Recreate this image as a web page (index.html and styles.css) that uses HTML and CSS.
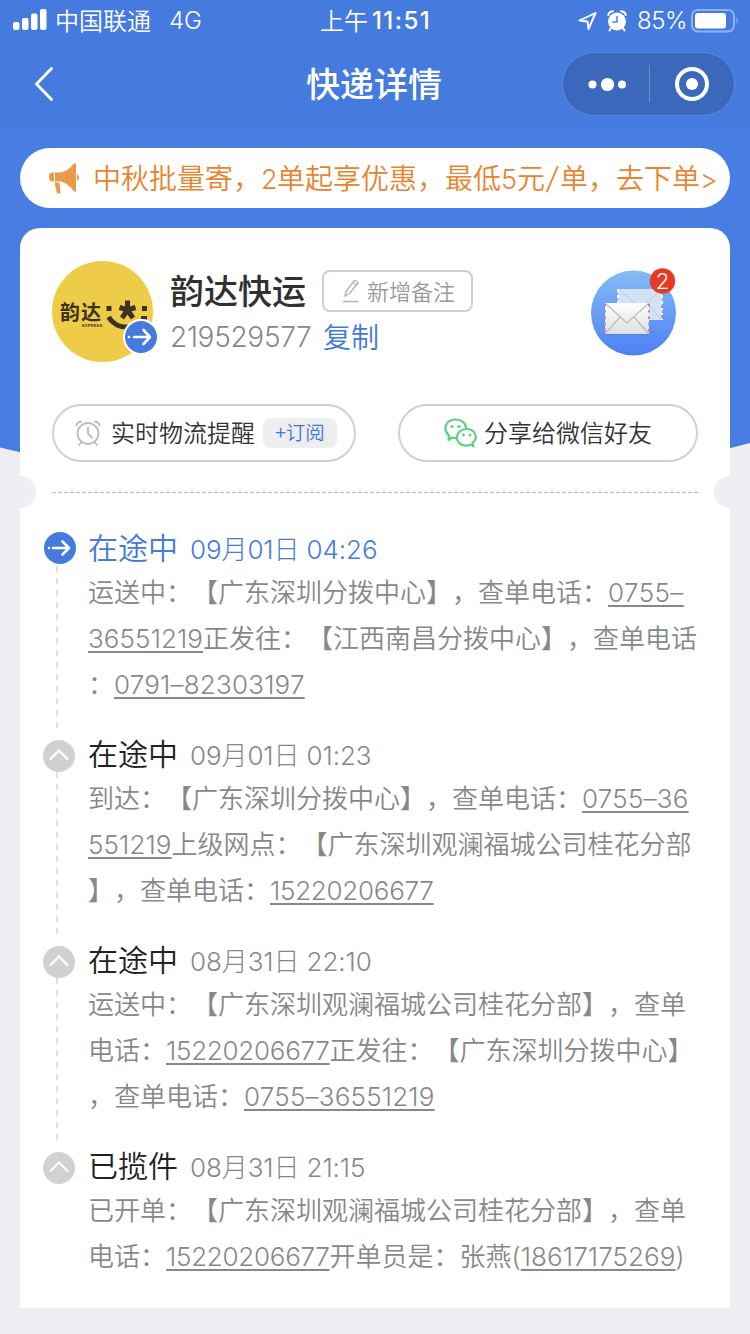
FILE: index.html
```html
<!DOCTYPE html>
<html lang="zh-CN">
<head>
<meta charset="utf-8">
<title>快递详情</title>
<link rel="stylesheet" href="styles.css">
</head>
<body>
<div class="page">
  <svg class="hero" viewBox="0 0 750 480"><path fill="#487de3" d="M0 128H750V443Q560 495 375 495T0 447.500Z"/><path fill="#457bdf" d="M0 0H750V128H0Z"/></svg>

  <header class="status">
    <div class="status-left">
      <svg class="signal" width="34" height="22" viewBox="0 0 34 22" fill="#fff"><rect x="0" y="13" width="6.500" height="8" rx="2"/><rect x="9" y="9" width="6.500" height="12" rx="2"/><rect x="18" y="4.500" width="6.500" height="16.500" rx="2"/><rect x="27" y="0" width="6.500" height="21" rx="2"/></svg>
      <span class="carrier">中国联通</span><span class="net">4G</span>
    </div>
    <div class="clock"><span>上午</span><b>11:51</b></div>
    <div class="status-right">
      <svg width="20" height="20" viewBox="0 0 20 20"><path d="M1.500 9.500L17.500 2 10.500 18 9.500 10.500Z" fill="none" stroke="#fff" stroke-width="1.900" stroke-linejoin="round"/></svg>
      <svg class="alarm" width="20" height="22" viewBox="0 0 20 22"><circle cx="10" cy="11.500" r="9" fill="#fff"/><path d="M1.200 5Q2 1.500 6 1.200M18.800 5Q18 1.500 14 1.200M4 18L2.500 20.500M16 18L17.500 20.500" stroke="#fff" stroke-width="2" fill="none" stroke-linecap="round"/><path d="M10 6V12H5.500" stroke="#457bdf" stroke-width="1.400" fill="none"/></svg>
      <span class="percent">85%</span>
      <svg width="48" height="24" viewBox="0 0 48 24"><rect x="1" y="1" width="42" height="21.500" rx="6" fill="none" stroke="#8fb1ee" stroke-width="2"/><rect x="4" y="4" width="31" height="15.500" rx="3" fill="#fff"/><path d="M45.500 8Q48 11.500 45.500 15Z" fill="#8fb1ee"/></svg>
    </div>
  </header>

  <nav class="nav">
    <svg class="back" width="20" height="34" viewBox="0 0 20 34"><path d="M17.500 1.500L2.500 17 17.500 32.500" fill="none" stroke="#fff" stroke-width="2.800" stroke-linecap="round" stroke-linejoin="round"/></svg>
    <h1>快递详情</h1>
    <div class="capsule">
      <svg width="171" height="61" viewBox="0 0 171 61"><g fill="#fff"><circle cx="29.500" cy="31.500" r="4"/><circle cx="44.500" cy="31.500" r="6.600"/><circle cx="59" cy="31.500" r="4"/><circle cx="129" cy="31" r="6"/></g><circle cx="129" cy="31" r="15" fill="none" stroke="#fff" stroke-width="4"/><path d="M86.500 12V49" stroke="#6b90d2" stroke-width="1"/></svg>
    </div>
  </nav>

  <div class="banner">
    <svg width="30" height="31" viewBox="0 0 30 31" fill="#e99a4c"><path d="M0 13.500Q0 9.500 4 9.500H5V18.500H4Q0 18.500 0 13.500ZM6 9.500H12Q19 8 25 0.500H27V28.500H25Q20 21 12 18.500H6ZM5.500 19.500H10.500L11.500 30.500H8ZM28 11Q30 12 30 14.500T28 18Z"/></svg>
    <span>中秋批量寄，<i>2</i>单起享优惠，最低<i>5</i>元<i class="slash">/</i>单，去下单<i>&gt;</i></span>
  </div>

  <main class="card">
    <section class="head">
      <div class="logo">
        <span class="logo-name">韵达</span><span class="logo-sub">EXPRESS</span>
        <svg class="logo-art" width="101" height="101" viewBox="0 0 101 101"><g fill="none" stroke="#3b321f"><path d="M56.500 56Q64 68 80 66" stroke-width="5"/><path d="M75.500 39.500V50M67.500 46.500L75.500 49 83.500 46.500M75.500 49L70 57M75.500 49L81 57" stroke-width="5"/></g><g fill="#3b321f"><rect x="54.500" y="45" width="5" height="5"/><rect x="90" y="45" width="5" height="5"/><rect x="89" y="55" width="6" height="3.500"/></g></svg>
        <svg class="logo-badge" width="36" height="36" viewBox="0 0 36 36"><circle cx="18" cy="18" r="17" fill="#457bdd" stroke="#fff" stroke-width="2"/><path d="M11 18H27M20.500 11L27 18 20.500 25" fill="none" stroke="#fff" stroke-width="2.600" stroke-linecap="round" stroke-linejoin="round"/><circle cx="6" cy="18" r="1.300" fill="#fff"/></svg>
      </div>
      <div class="info">
        <div class="name-row"><h2>韵达快运</h2>
          <button class="note"><svg width="18" height="24" viewBox="0 0 18 24" fill="none" stroke="#b5b5b5" stroke-width="1.400"><path d="M3 17L4 12.500 12 1.800Q15 1 16 4L7.500 14.500ZM11 3.500L14.500 6M1 22.500H16.500"/></svg><span>新增备注</span></button>
        </div>
        <div class="number-row"><span class="waybill">219529577</span><a class="copy">复制</a></div>
      </div>
      <div class="mail">
        <svg width="88" height="92" viewBox="0 0 88 92">
          <defs><linearGradient id="sky" x1="0" y1="0" x2="0" y2="1"><stop offset="0" stop-color="#84bcf3"/><stop offset="1" stop-color="#4d7ff5"/></linearGradient><linearGradient id="paper" x1="0" y1="0" x2="0" y2="1"><stop offset="0" stop-color="#fff"/><stop offset="1" stop-color="#dedede"/></linearGradient></defs>
          <circle cx="42.500" cy="47" r="42.500" fill="url(#sky)"/>
          <path d="M27 23H71V54H27Z" fill="#d3e3f7"/><path d="M27 23L49 42 71 23M29 54L43 38M71 54L56 37" fill="none" stroke="#b4cbe7"/><path d="M27 23V54M71 23V54" stroke="#fff" stroke-width="2" stroke-dasharray="3 3"/><path d="M71 40V54" stroke="#d26f93" stroke-width="2" stroke-dasharray="2 7"/>
          <path d="M14 69H58V67H14Z" fill="#4d72b6" opacity=".5"/><path d="M14 37H58V68H14Z" fill="url(#paper)"/><path d="M14 68L29 51M58 68L43 51M14 37L36 57 58 37" fill="none" stroke="#bbb" stroke-width="1.200"/><path d="M14 38V68M58 38V68" stroke="#e27786" stroke-width="2" stroke-dasharray="2.500 10"/><path d="M14 44V68M58 44V68" stroke="#6faccf" stroke-width="2" stroke-dasharray="2.500 10"/>
          <circle cx="71.500" cy="15" r="12.700" fill="#e53a25"/>
        </svg><span class="count">2</span>
      </div>
    </section>

    <section class="actions">
      <button class="pill remind"><svg width="26" height="26" viewBox="0 0 26 26" fill="none" stroke="#bdbdbd" stroke-width="1.900" stroke-linecap="round"><circle cx="13" cy="13.500" r="10.500"/><path d="M13 7.500V13.500L17 17.500M1.500 5.500Q2.500 2 6 1.500M24.500 5.500Q23.500 2 20 1.500M6 22.500L4 25M20 22.500L22 25"/></svg><span>实时物流提醒</span><em>+订阅</em></button>
      <button class="pill share"><svg width="34" height="31" viewBox="0 0 34 31" fill="none" stroke="#5fd080" stroke-width="2.200" stroke-linejoin="round"><path d="M13 19.500Q10 20.500 7.800 19.500L4.500 22 5 17.500C-2 11 2 1.500 11.500 1.500C17.500 1.500 22 5 22 10.500"/><path d="M27 26.500C21 29.500 13 26 13 20C13 14 17.500 11 22.500 11C31 11 35 20 28.500 25L29.500 28.500Z"/><g fill="#5fd080" stroke="none"><circle cx="8" cy="8.500" r="1.600"/><circle cx="15" cy="8.500" r="1.600"/><circle cx="19.500" cy="17" r="1.400"/><circle cx="26" cy="17" r="1.400"/></g></svg><span>分享给微信好友</span></button>
    </section>

    <div class="tear"><svg width="646" height="2" viewBox="0 0 646 2"><path d="M0 1.500H646" stroke="#bbb" stroke-width="1" stroke-dasharray="4 2"/></svg></div>

    <ol class="timeline">
      <li class="event current">
        <div class="rail"><svg width="32" height="32" viewBox="0 0 32 32"><circle cx="16" cy="16" r="16" fill="#457bdd"/><path d="M9 16H25M18.500 9.500L25 16 18.500 22.500" fill="none" stroke="#fff" stroke-width="2.600" stroke-linecap="round" stroke-linejoin="round"/><circle cx="5" cy="16" r="1.200" fill="#fff"/></svg></div>
        <div class="body">
          <h3>在途中<time>09月01日 04:26</time></h3>
          <p>运送中：【广东深圳分拨中心】，查单电话：<u class="area">0755–</u></p>
          <p><u>36551219</u>正发往：【江西南昌分拨中心】，查单电话</p>
          <p>：<u class="tel">0791–82303197</u></p>
        </div>
      </li>
      <li class="event">
        <div class="rail"><svg width="32" height="32" viewBox="0 0 32 32"><circle cx="16" cy="16" r="16" fill="#d1d1d1"/><path d="M7 19.500L16 10.500 25 19.500" fill="none" stroke="#fff" stroke-width="2.200"/></svg></div>
        <div class="body">
          <h3>在途中<time>09月01日 01:23</time></h3>
          <p>到达：【广东深圳分拨中心】，查单电话：<u class="tel">0755–36</u></p>
          <p><u>551219</u>上级网点：【广东深圳观澜福城公司桂花分部</p>
          <p>】，查单电话：<u class="mobile">15220206677</u></p>
        </div>
      </li>
      <li class="event">
        <div class="rail"><svg width="32" height="32" viewBox="0 0 32 32"><circle cx="16" cy="16" r="16" fill="#d1d1d1"/><path d="M7 19.500L16 10.500 25 19.500" fill="none" stroke="#fff" stroke-width="2.200"/></svg></div>
        <div class="body">
          <h3>在途中<time>08月31日 22:10</time></h3>
          <p>运送中：【广东深圳观澜福城公司桂花分部】，查单</p>
          <p>电话：<u class="mobile">15220206677</u>正发往：【广东深圳分拨中心】</p>
          <p>，查单电话：<u class="tel">0755–36551219</u></p>
        </div>
      </li>
      <li class="event last">
        <div class="rail"><svg width="32" height="32" viewBox="0 0 32 32"><circle cx="16" cy="16" r="16" fill="#d1d1d1"/><path d="M7 19.500L16 10.500 25 19.500" fill="none" stroke="#fff" stroke-width="2.200"/></svg></div>
        <div class="body">
          <h3>已揽件<time>08月31日 21:15</time></h3>
          <p>已开单：【广东深圳观澜福城公司桂花分部】，查单</p>
          <p>电话：<u class="mobile">15220206677</u>开单员是：张燕<span class="lat">(</span><u>18617175269</u><span class="lat">)</span></p>
        </div>
      </li>
    </ol>
  </main>
</div>
</body>
</html>
```
FILE: styles.css
```css
* { box-sizing: border-box; margin: 0; padding: 0; }
body { background: #efeef3; font-family: "Noto Sans CJK SC", sans-serif; font-weight: 350; text-spacing-trim: space-all; }
svg { display: block; flex: none; }
button { background: none; font: inherit; color: inherit; }
.page { position: relative; width: 750px; height: 1334px; overflow: hidden; }
.hero { position: absolute; left: 0; top: 0; width: 750px; height: 480px; z-index: -1; }

.status { height: 40px; display: grid; grid-template-columns: 1fr 110px 1fr; color: #fff; font-size: 24px; line-height: 40px; white-space: nowrap; }
.status-left { display: flex; padding-left: 13px; }
.signal { margin-top: 9px; }
.carrier { margin-left: 8px; }
.net { margin-left: 18px; font-family: Inter, sans-serif; font-size: 24px; letter-spacing: -0.2px; padding-top: 1px; }
.clock { display: flex; justify-content: space-between; }
.clock b { font-family: Inter, sans-serif; font-size: 24px; font-weight: 500; letter-spacing: 1.4px; margin-right: -1px; padding-top: 1px; }
.status-right { display: flex; justify-content: flex-end; align-items: center; padding-right: 11px; }
.alarm { margin-left: 9px; }
.percent { width: 50px; margin: 0 4px 0 10px; font-family: Inter, sans-serif; font-size: 24px; letter-spacing: -.4px; padding-top: 1px; }

.nav { height: 88px; display: grid; grid-template-columns: 272px 1fr 172px; align-items: center; padding: 0 15px 0 34px; }
h1 { color: #fff; font-size: 34px; line-height: 50px; font-weight: 500; margin-top: -2px; }
.capsule { width: 173px; height: 64px; border: 1px solid #5e8adb; border-radius: 32px; background: #3b68bb; margin-left: -1px; }

.banner { margin: 20px 20px 0; height: 60px; border-radius: 30px; background: #fff; display: flex; align-items: center; padding-left: 29px; color: #e8842d; font-size: 28px; line-height: 60px; white-space: nowrap; }
.banner span { margin-left: 14px; }
.banner i { display: inline-block; width: 16px; font-family: Inter, sans-serif; font-style: normal; text-align: center; font-size: 27px; }
.banner .slash { width: 15px; font-size: 30px; transform: skewX(-9deg); }

.card { margin: 20px 20px 0; height: 1080px; border-radius: 20px 20px 0 0; background: #fff; }
.head { display: flex; height: 176px; padding: 33px 32px 0; }
.logo { position: relative; width: 101px; height: 101px; border-radius: 50%; background: #efcc48; color: #3b321f; }
.logo-name { position: absolute; left: 8px; top: 41px; font-size: 20px; line-height: 20px; font-weight: 700; letter-spacing: 1px; }
.logo-sub { position: absolute; left: 30px; top: 62px; width: 22px; font: 700 4px/5px "Liberation Sans", sans-serif; letter-spacing: .2px; }
.logo-art { position: absolute; left: 0; top: 0; }
.logo-badge { position: absolute; left: 71px; top: 58px; }
.info { width: 320px; margin-left: 18px; padding-top: 7px; }
.name-row { display: flex; height: 46px; align-items: center; }
h2 { width: 151px; font-size: 34px; line-height: 46px; font-weight: 500; color: #303030; white-space: nowrap; margin: -2px 0 0 -1px; }
.note { display: flex; align-items: center; width: 151px; height: 42px; border: 2px solid #cfcfcf; border-radius: 8px; padding-left: 18px; font-size: 22px; line-height: 36px; color: #999; white-space: nowrap; margin: -1px 0 0 1px; }
.note span { margin: -2px 0 0 7px; }
.number-row { display: flex; font-size: 28px; line-height: 44px; }
.waybill { width: 152px; margin: 1px 0 -1px -1px; padding-right: 0; font-family: Inter, sans-serif; font-weight: 300; color: #888; font-size: 28px; letter-spacing: -.3px; }
.copy { color: #4278d9; margin-left: 1px; }
.mail { position: relative; margin-left: 100px; margin-top: 5px; }
.count { position: absolute; left: 59px; top: 2px; width: 25px; color: #fff; font: 300 22px/26px Inter, sans-serif; text-align: center; }

.actions { display: flex; justify-content: space-between; padding: 0 32px; color: #333; font-size: 24px; }
.pill { display: flex; align-items: center; height: 58px; border: 2px solid #d1d1d1; border-radius: 29px; line-height: 52px; white-space: nowrap; }
.remind { width: 304px; padding-left: 21px; }
.remind span, .share span { margin-top: -2px; }
.remind span { margin-left: 10px; }
.remind em { width: 74px; height: 30px; margin-left: 8px; border-radius: 8px; background: #eee; color: #3e77e2; font-style: normal; font-size: 19.5px; line-height: 28px; text-align: center; }
.share { width: 300px; padding-left: 44px; }
.share span { margin-left: 6px; }

.tear { display: flex; justify-content: center; align-items: center; height: 32px; margin-top: 14px; background: radial-gradient(circle at 0 50%, #efeef3 15.5px, transparent 16.500px), radial-gradient(circle at 100% 50%, #efeef3 15.5px, transparent 16.500px); }

.timeline { list-style: none; padding: 17px 0 0 24px; }
.event { display: flex; height: 206px; }
.rail { width: 44px; padding-top: 9px; display: flex; flex-direction: column; background: repeating-linear-gradient(to bottom, #dfdfdf 0 6px, transparent 6px 12px) 12px 41px / 2px 163px no-repeat; }
.current .rail { padding-top: 7px; }
.event:not(.current) .rail svg { margin-left: -1px; }
.last .rail { background: none; }
.body { color: #888; white-space: nowrap; }
h3 { height: 43px; font-size: 30px; line-height: 43px; font-weight: 350; color: #222; }
time { margin-left: 12px; font-size: 26px; font-weight: 300; line-height: 0; color: #888; font-family: Inter, "Noto Sans CJK SC", sans-serif; letter-spacing: -.1px; }
.current h3, .current time { color: #457bdd; }
p { height: 46px; font-size: 26px; line-height: 46px; }
u, .lat { font-family: Inter, sans-serif; font-weight: 300; line-height: 0; letter-spacing: .1px; }
u { text-decoration-thickness: 1.5px; text-underline-offset: 3px; }
.area { letter-spacing: .4px; }
.tel { letter-spacing: .2px; }
.mobile { letter-spacing: -.27px; }
```
